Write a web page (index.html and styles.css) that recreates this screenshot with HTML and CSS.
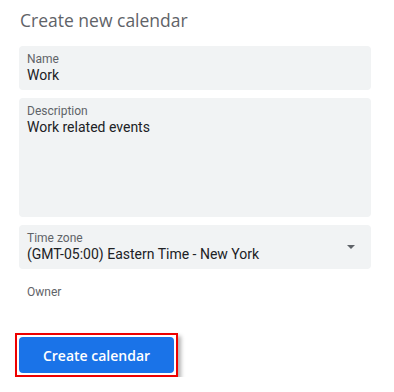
FILE: index.html
```html
<!DOCTYPE html>
<html lang="en">
<head>
    <meta charset="UTF-8">
    <meta name="viewport" content="width=device-width, initial-scale=1.0">
    <title>Create new calendar</title>
    <link rel="stylesheet" href="styles.css">
</head>
<body>
    <div class="page">
        <h1 class="title">Create new calendar</h1>

        <div class="field">
            <div class="field-label">Name</div>
            <div class="field-value">Work</div>
        </div>

        <div class="field field-tall">
            <div class="field-label">Description</div>
            <div class="field-value">Work related events</div>
        </div>

        <div class="field field-select">
            <div>
                <div class="field-label">Time zone</div>
                <div class="field-value">(GMT-05:00) Eastern Time - New York</div>
            </div>
            <span class="arrow"></span>
        </div>

        <div class="owner">Owner</div>

        <div class="highlight">
            <button class="btn">Create calendar</button>
        </div>
    </div>
</body>
</html>
```

FILE: styles.css
```css
body {
    margin: 0;
    background: #fff;
    font-family: Roboto, Arial, sans-serif;
}
.page {
    width: 352px;
    padding: 9px 0 0 19px;
    display: flex;
    flex-direction: column;
}
.title {
    margin: 0 0 15px 1px;
    font-family: "Open Sans", Arial, sans-serif;
    font-weight: 400;
    font-size: 17.5px;
    line-height: 22px;
    color: #5f6368;
}
.field {
    background: #f1f3f4;
    border-radius: 4px;
    height: 44px;
    box-sizing: border-box;
    padding: 6px 8px 0;
    margin-bottom: 8px;
}
.field-tall {
    height: 119px;
}
.field-select {
    display: flex;
    justify-content: space-between;
    align-items: center;
}
.field-select > div {
    align-self: flex-start;
}
.field-label {
    font-size: 12px;
    line-height: 14px;
    color: #5f6368;
}
.field-value {
    font-size: 14px;
    line-height: 18px;
    color: #202124;
}
.arrow {
    width: 0;
    height: 0;
    margin: 0 8px 6px 0;
    border-left: 4px solid transparent;
    border-right: 4px solid transparent;
    border-top: 4px solid #5f6368;
}
.owner {
    margin: 8px 0 0 8px;
    font-size: 12px;
    line-height: 14px;
    color: #5f6368;
}
.highlight {
    align-self: flex-start;
    margin: 34px 0 0 -4px;
    padding: 2px;
    border: 2px solid #e00;
    box-shadow: 3px 3px 4px rgba(0, 0, 0, 0.3);
}
.btn {
    display: block;
    width: 155px;
    height: 36px;
    border: none;
    border-radius: 4px;
    background: #1a73e8;
    color: #fff;
    font-family: "Open Sans", Arial, sans-serif;
    font-weight: 600;
    font-size: 14px;
    cursor: pointer;
}
```
